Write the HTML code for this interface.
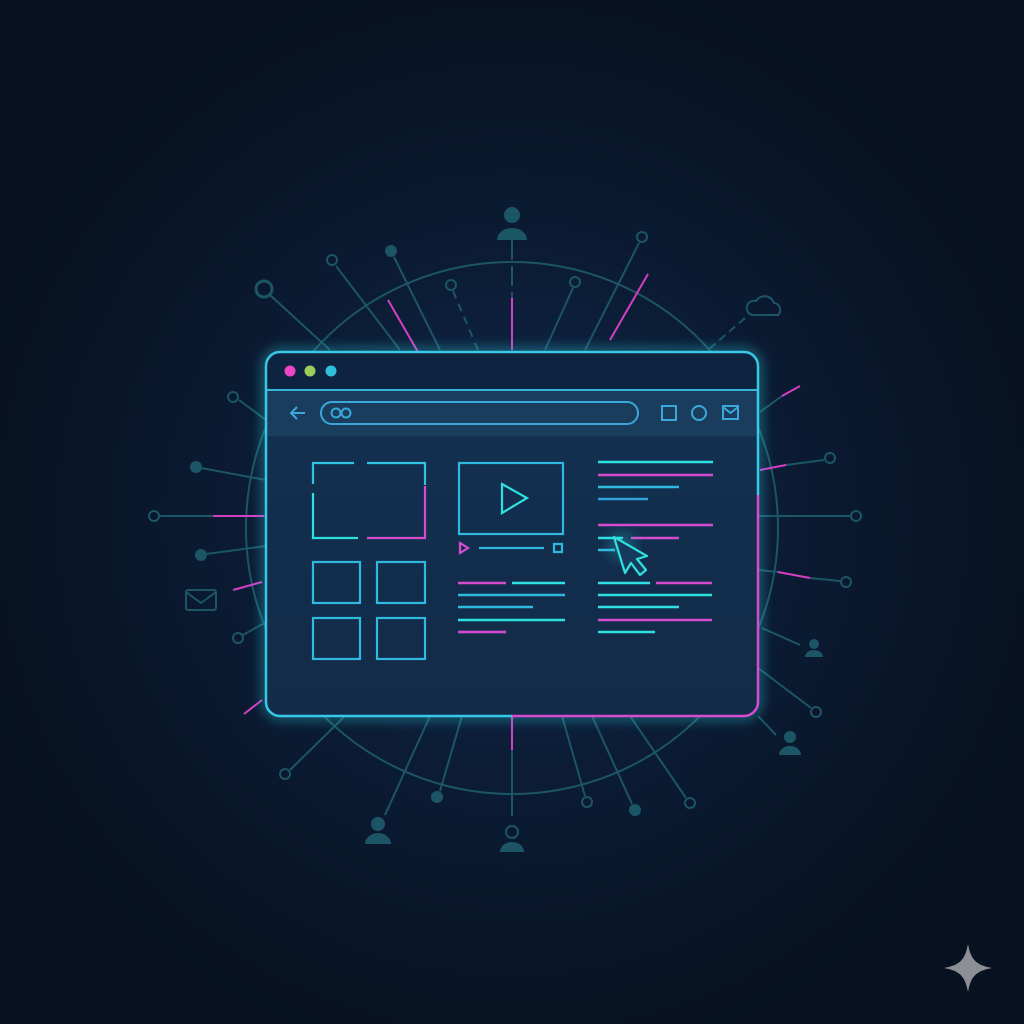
<!DOCTYPE html>
<html><head><style>
html,body{margin:0;padding:0;width:1024px;height:1024px;overflow:hidden;background:#08142a;}
</style></head><body>
<svg width="1024" height="1024" viewBox="0 0 1024 1024" xmlns="http://www.w3.org/2000/svg">
<defs>
<radialGradient id="bg" cx="512" cy="520" r="560" gradientUnits="userSpaceOnUse">
<stop offset="0" stop-color="#11294a"/><stop offset="0.5" stop-color="#0b1b33"/><stop offset="1" stop-color="#07111f"/>
</radialGradient>
<linearGradient id="win" x1="0" y1="0" x2="0" y2="1">
<stop offset="0" stop-color="#133152"/><stop offset="1" stop-color="#122b48"/>
</linearGradient>
<filter id="glow" x="-20%" y="-20%" width="140%" height="140%"><feGaussianBlur stdDeviation="6"/></filter>
</defs>
<rect width="1024" height="1024" fill="url(#bg)"/>
<g stroke="#1c5566" stroke-width="2" fill="none">
<circle cx="512" cy="528" r="266"/>
<line x1="270" y1="295" x2="330" y2="350"/>
<line x1="336" y1="266" x2="400" y2="350"/>
<line x1="394" y1="257" x2="440" y2="350"/>
<line x1="453" y1="291" x2="478" y2="350" stroke-dasharray="8 6"/>
<line x1="512" y1="240" x2="512" y2="350" stroke-dasharray="20 6"/>
<line x1="573" y1="288" x2="545" y2="350"/>
<line x1="639" y1="243" x2="585" y2="350"/>
<line x1="745" y1="318" x2="708" y2="350" stroke-dasharray="8 5"/>
<line x1="239" y1="400" x2="266" y2="420"/>
<line x1="201" y1="468" x2="266" y2="480"/>
<line x1="160" y1="516" x2="266" y2="516"/>
<line x1="206" y1="554" x2="266" y2="546"/>
<line x1="243" y1="635" x2="266" y2="622"/>
<line x1="290" y1="770" x2="345" y2="716"/>
<line x1="440" y1="791" x2="462" y2="716"/>
<line x1="385" y1="815" x2="430" y2="716"/>
<line x1="512" y1="750" x2="512" y2="816"/>
<line x1="585" y1="796" x2="562" y2="716"/>
<line x1="632" y1="804" x2="592" y2="716"/>
<line x1="686" y1="798" x2="630" y2="716"/>
<line x1="811" y1="708" x2="758" y2="668"/>
<line x1="776" y1="735" x2="758" y2="716"/>
<line x1="840" y1="581" x2="810" y2="578"/>
<line x1="758" y1="570" x2="778" y2="572"/>
<line x1="850" y1="516" x2="758" y2="516"/>
<line x1="824" y1="460" x2="786" y2="465"/>
<line x1="760" y1="412" x2="782" y2="396"/>
<line x1="800" y1="645" x2="762" y2="628"/>
<circle cx="264" cy="289" r="8" stroke-width="3"/>
<circle cx="332" cy="260" r="5"/>
<circle cx="451" cy="285" r="5"/>
<circle cx="575" cy="282" r="5"/>
<circle cx="642" cy="237" r="5"/>
<circle cx="233" cy="397" r="5"/>
<circle cx="154" cy="516" r="5"/>
<circle cx="238" cy="638" r="5"/>
<circle cx="285" cy="774" r="5"/>
<circle cx="587" cy="802" r="5"/>
<circle cx="690" cy="803" r="5"/>
<circle cx="816" cy="712" r="5"/>
<circle cx="846" cy="582" r="5"/>
<circle cx="856" cy="516" r="5"/>
<circle cx="830" cy="458" r="5"/>
<path d="M752 315 h26 a7 7 0 0 0 -4 -12 a10 10 0 0 0 -18 -2 a7 7 0 0 0 -4 14z"/>
<rect x="186" y="590" width="30" height="20" rx="2"/>
<path d="M186 592 l15 11 l15 -11"/>
</g>
<g fill="#1c5566">
<circle cx="391" cy="251" r="6"/><circle cx="196" cy="467" r="6"/><circle cx="201" cy="555" r="6"/>
<circle cx="437" cy="797" r="6"/><circle cx="635" cy="810" r="6"/>
<circle cx="512" cy="215" r="8"/><path d="M497 240 a15 12 0 0 1 30 0z"/>
<circle cx="378" cy="824" r="7"/><path d="M365 844 a13 11 0 0 1 26 0z"/>
<circle cx="790" cy="737" r="6"/><path d="M779 755 a11 9 0 0 1 22 0z"/>
<circle cx="814" cy="644" r="5"/><path d="M805 657 a9 7 0 0 1 18 0z"/>
</g>
<g fill="none" stroke="#1c5566" stroke-width="2"><circle cx="512" cy="832" r="6"/></g>
<path d="M500 852 a12 10 0 0 1 24 0z" fill="#1c5566"/>
<g stroke="#d43fc4" stroke-width="2">
<line x1="388" y1="300" x2="418" y2="352"/><line x1="512" y1="298" x2="512" y2="350"/>
<line x1="648" y1="274" x2="610" y2="340"/><line x1="213" y1="516" x2="264" y2="516"/>
<line x1="233" y1="590" x2="262" y2="582"/><line x1="244" y1="714" x2="262" y2="700"/>
<line x1="512" y1="716" x2="512" y2="750"/><line x1="778" y1="572" x2="810" y2="578"/>
<line x1="760" y1="470" x2="786" y2="465"/><line x1="782" y1="396" x2="800" y2="386"/>
</g>
<!-- window -->
<rect x="266" y="352" width="492" height="364" rx="15" fill="none" stroke="#2fd9e8" stroke-width="6" filter="url(#glow)" opacity="0.6"/>
<rect x="266" y="352" width="492" height="364" rx="15" fill="url(#win)"/>
<path d="M266 390 V366 a14 14 0 0 1 14 -14 H744 a14 14 0 0 1 14 14 V390z" fill="#0e2340"/>
<rect x="267" y="390" width="490" height="46" fill="#1a3d5e"/>
<line x1="266" y1="390" x2="758" y2="390" stroke="#33b8d8" stroke-width="2"/>
<path d="M512 716 H744 a14 14 0 0 0 14 -14 V495" fill="none" stroke="#d64bd0" stroke-width="2.5"/>
<path d="M758 495 V366 a14 14 0 0 0 -14 -14 H280 a14 14 0 0 0 -14 14 V702 a14 14 0 0 0 14 14 H512" fill="none" stroke="#36c8e6" stroke-width="2.5"/>
<circle cx="290" cy="371" r="5.5" fill="#ee44c8"/><circle cx="310" cy="371" r="5.5" fill="#9ccc5c"/><circle cx="331" cy="371" r="5.5" fill="#2fc0de"/>
<g fill="none" stroke="#3aa8d8" stroke-width="2">
<path d="M305 413 h-14 m6 -6 l-6 6 l6 6"/>
<rect x="321" y="402" width="317" height="22" rx="11"/>
<circle cx="336" cy="413" r="4.5"/><circle cx="346" cy="413" r="4.5"/>
<rect x="662" y="406" width="14" height="14"/>
<circle cx="699" cy="413" r="7"/>
<rect x="723" y="406" width="15" height="13"/><path d="M723 407 l7.5 6 l7.5 -6"/>
</g>
<g fill="none" stroke-width="2.2">
<path d="M313 484 V463 H354 M367 463 H425 V485" stroke="#2fc3e0"/>
<path d="M313 493 V538 H358" stroke="#2fe0e0"/>
<path d="M367 538 H425 V486" stroke="#d64bd0"/>
<rect x="313" y="562" width="47" height="41" stroke="#2fb8e0"/>
<rect x="377" y="562" width="48" height="41" stroke="#2fb8e0"/>
<rect x="313" y="618" width="47" height="41" stroke="#2fb8e0"/>
<rect x="377" y="618" width="48" height="41" stroke="#2fb8e0"/>
<rect x="459" y="463" width="104" height="71" stroke="#2fb8e0"/>
<path d="M502 484 V513 L527 498z" stroke="#2fe0e0"/>
<path d="M460 543 V553 L468 548z" stroke="#d64bd0"/>
<line x1="479" y1="548" x2="544" y2="548" stroke="#2fb8e0"/>
<rect x="554" y="544" width="8" height="8" stroke="#2fb8e0"/>
</g>
<g stroke-width="2.5">
<line x1="458" y1="583" x2="506" y2="583" stroke="#d64bd0"/><line x1="512" y1="583" x2="565" y2="583" stroke="#2fe0e0"/>
<line x1="458" y1="595" x2="565" y2="595" stroke="#2fb8e0"/><line x1="458" y1="607" x2="533" y2="607" stroke="#2fb8e0"/>
<line x1="458" y1="620" x2="565" y2="620" stroke="#2fe0e0"/><line x1="458" y1="632" x2="506" y2="632" stroke="#d64bd0"/>
<line x1="598" y1="462" x2="713" y2="462" stroke="#2fe0e0"/><line x1="598" y1="475" x2="713" y2="475" stroke="#d64bd0"/>
<line x1="598" y1="487" x2="679" y2="487" stroke="#2fb8e0"/><line x1="598" y1="499" x2="648" y2="499" stroke="#2fa0d8"/>
<line x1="598" y1="525" x2="713" y2="525" stroke="#d64bd0"/>
<line x1="598" y1="538" x2="623" y2="538" stroke="#2fe0e0"/><line x1="631" y1="538" x2="679" y2="538" stroke="#d64bd0"/>
<line x1="598" y1="550" x2="615" y2="550" stroke="#2fb8e0"/>
<line x1="598" y1="583" x2="650" y2="583" stroke="#2fe0e0"/><line x1="656" y1="583" x2="712" y2="583" stroke="#d64bd0"/>
<line x1="598" y1="595" x2="712" y2="595" stroke="#2fe0e0"/><line x1="598" y1="607" x2="679" y2="607" stroke="#2fe0e0"/>
<line x1="598" y1="620" x2="712" y2="620" stroke="#d64bd0"/><line x1="598" y1="632" x2="655" y2="632" stroke="#2fe0e0"/>
</g>
<circle cx="622" cy="546" r="14" fill="#2fe0e0" opacity="0.25" filter="url(#glow)"/>
<path d="M614 537 L625 573 L631 563 L640 575 L646 570 L637 559 L647 556z" fill="#163a5c" stroke="#2fe0e0" stroke-width="2.2" stroke-linejoin="round"/>
<path d="M968 944 C971 960 976 965 992 968 C976 971 971 976 968 992 C965 976 960 971 944 968 C960 965 965 960 968 944z" fill="#8c8f96"/>
</svg>
</body></html>
